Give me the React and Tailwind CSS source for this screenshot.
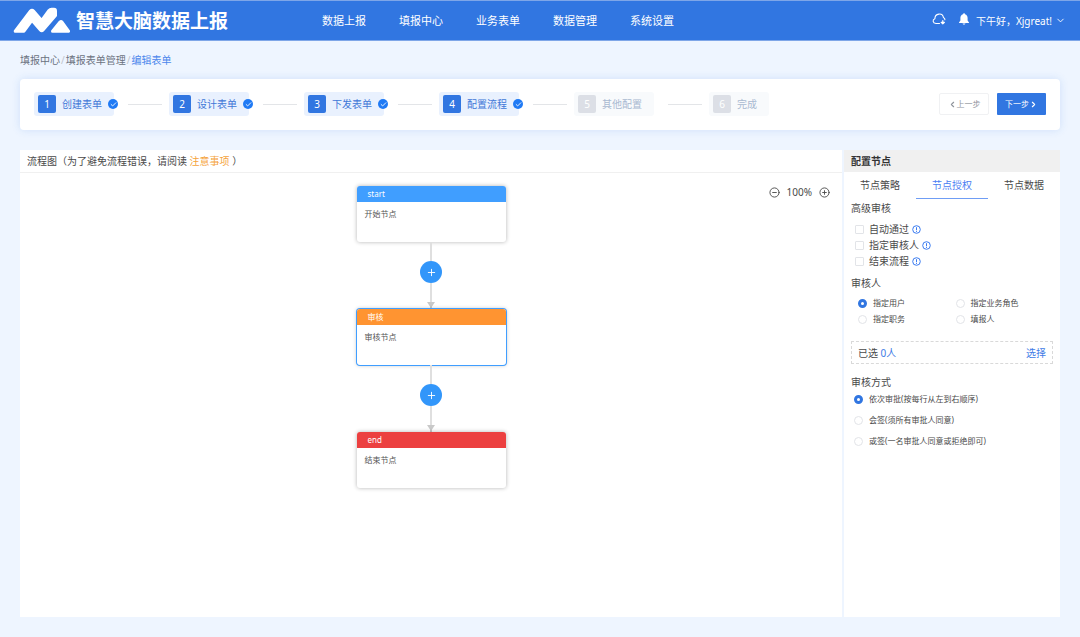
import { useState } from 'react';
import { clsx } from 'clsx';
import { Check, ChevronDown, ChevronLeft, ChevronRight, CircleMinus, CirclePlus, Plus } from 'lucide-react';

const navItems = ['数据上报', '填报中心', '业务表单', '数据管理', '系统设置'];

const steps = [
    { label: '创建表单', done: true },
    { label: '设计表单', done: true },
    { label: '下发表单', done: true },
    { label: '配置流程', done: true },
    { label: '其他配置', done: false },
    { label: '完成', done: false },
];

const nodes = [
    { id: 'start', title: 'start', desc: '开始节点', color: 'bg-[#409eff]' },
    { id: 'audit', title: '审核', desc: '审核节点', color: 'bg-[#ff9431]' },
    { id: 'end', title: 'end', desc: '结束节点', color: 'bg-[#ec4040]' },
];

const tabs = ['节点策略', '节点授权', '节点数据'];
const advanced = ['自动通过', '指定审核人', '结束流程'];
const reviewers = ['指定用户', '指定业务角色', '指定职务', '填报人'];
const modes = ['依次审批(按每行从左到右顺序)', '会签(须所有审批人同意)', '或签(一名审批人同意或拒绝即可)'];

function Logo() {
    return (
        <svg viewBox="0 0 58 28" className="h-7 w-[58px]" fill="#fff" stroke="#fff" strokeWidth="3" strokeLinejoin="round">
            <path d="M3.2 24.200 L18.500 4 Q20 2.300 21.500 4 L29.700 13.500 L37 3.500 Q38 2.300 39.500 2.300 H42 Q43.500 2.300 43.500 4 V8.500 L31 23 Q29.700 24.500 28.400 23 L21 14.500 Q20 13.500 19 14.700 L12 24.200 Z" />
            <path d="M40.500 24.200 L48 15 Q49 14 50 15 L56.500 24.200 Z" />
        </svg>
    );
}

function CloudIcon() {
    return (
        <svg viewBox="0 0 14 12" className="h-3 w-[14px]" fill="none" stroke="#fff" strokeWidth="1.1" strokeLinecap="round" strokeLinejoin="round">
            <path d="M7.500 10.500 H4 C0.600 10.300 0.200 6.800 2.900 5.800 C2.800 0 10.700 -0.500 11.400 4.500 C12.500 5 13 5.800 12.900 6.800" />
            <path d="M10.800 7.600 V10.800 M9.200 9.300 L10.800 10.900 L12.400 9.300 Z" strokeWidth="1.200" />
        </svg>
    );
}

function BellIcon() {
    return (
        <svg viewBox="0 0 12 12" className="size-3" fill="#fff">
            <path d="M6 0.300 C6.600 0.300 7 0.700 7 1.200 C8.800 1.700 9.600 3.200 9.600 5 V7.600 L11 9.400 V10 H1 V9.400 L2.400 7.600 V5 C2.400 3.200 3.200 1.700 5 1.200 C5 0.700 5.400 0.300 6 0.300 Z M4.600 10.600 H7.400 C7.200 12 4.800 12 4.600 10.600 Z" />
        </svg>
    );
}

function InfoIcon() {
    return (
        <svg viewBox="0 0 9 9" className="size-[9px]" fill="none" stroke="#3b7bf0" strokeWidth="1">
            <circle cx="4.500" cy="4.500" r="3.800" />
            <path d="M4.500 2.200 V5.200 M4.500 5.900 V6.900" />
        </svg>
    );
}

function Header() {
    return (
        <header className="flex h-[41px] items-center border-y border-[#7ea6e8] bg-[#3176e1] pl-3 pr-[14px] text-white">
            <Logo />
            <span className="ml-[6px] whitespace-nowrap text-[19px] leading-6 font-bold">智慧大脑数据上报</span>
            <nav className="ml-[94px] flex gap-[33px] whitespace-nowrap text-[11px] leading-4">
                {navItems.map((item) => (
                    <a key={item} href="#">{item}</a>
                ))}
            </nav>
            <div className="ml-auto flex items-center">
                <button aria-label="同步" className="pb-[3px]"><CloudIcon /></button>
                <button aria-label="通知" className="ml-3 pb-[3px]"><BellIcon /></button>
                <button className="ml-[6px] flex items-center gap-[3px] whitespace-nowrap text-[10px] leading-4">
                    下午好，Xjgreat!
                    <ChevronDown className="size-[11px]" strokeWidth={2} />
                </button>
            </div>
        </header>
    );
}

function Step({ index, label, done }) {
    return (
        <li className="flex items-center">
            {index > 0 && <span className="ml-[14px] mr-[7px] h-px w-[34px] bg-[#e3e5e8]" />}
            <div className={clsx(
                'relative flex h-6 items-center gap-[6px] rounded-[3px] pl-1 pr-3 text-[10px] leading-4 whitespace-nowrap',
                done ? 'bg-[#e9f1fe] text-[#3f78d8]' : 'bg-[#f8fafc] text-[#a9b9d1]'
            )}>
                <span className={clsx(
                    'flex size-[18px] items-center justify-center rounded-[2px] text-white',
                    done ? 'bg-[#3176e1]' : 'bg-[#dcdfe6]'
                )}>
                    {index + 1}
                </span>
                {label}
                {done && (
                    <span className="absolute -right-1 flex size-[10px] items-center justify-center rounded-full bg-[#1f7af5] text-white">
                        <Check className="size-[7px]" strokeWidth={3} />
                    </span>
                )}
            </div>
        </li>
    );
}

function FlowNode({ node, active, onSelect }) {
    return (
        <button
            onClick={onSelect}
            className={clsx(
                'flex h-14 w-[149px] flex-col overflow-hidden rounded-[3px] bg-white text-left text-[8px] leading-4 shadow-[0_0_4px_rgba(0,0,0,0.3)]',
                active && 'ring-1 ring-[#409eff]'
            )}
        >
            <span className={clsx('w-full pl-[11px] text-white', node.color)}>{node.title}</span>
            <span className="pl-2 pt-1 text-[#555]">{node.desc}</span>
        </button>
    );
}

function Connector() {
    return (
        <div className="flex flex-col items-center">
            <span className="h-[19px] w-[2px] bg-[#dfdfdf]" />
            <button aria-label="添加节点" className="flex size-[22px] items-center justify-center rounded-full bg-[#3296fa] text-white">
                <Plus className="size-[11px]" strokeWidth={2} />
            </button>
            <span className="h-[19px] w-[2px] bg-[#dfdfdf]" />
            <svg viewBox="0 0 8 7" className="h-[7px] w-2" fill="#c9c9c9">
                <path d="M0 0 H8 L5 4.500 V7 H3 V4.500 Z" />
            </svg>
        </div>
    );
}

function Radio({ name, label, checked, onChange }) {
    return (
        <label className="flex items-center gap-[6px] whitespace-nowrap text-[8px] leading-4">
            <input
                type="radio"
                name={name}
                checked={checked}
                onChange={onChange}
                className="size-[9px] shrink-0 appearance-none rounded-full border border-[#e2e4e8] bg-white checked:border-[3px] checked:border-[#3176e1]"
            />
            {label}
        </label>
    );
}

function ConfigPanel() {
    const [tab, setTab] = useState(1);
    const [reviewer, setReviewer] = useState(0);
    const [mode, setMode] = useState(0);

    return (
        <aside className="w-[216px] shrink-0 bg-white text-[10px] leading-4 text-[#4a4a4a]">
            <h2 className="bg-[#f0f0f0] px-[7px] py-[3px] font-bold text-[#333]">配置节点</h2>
            <div role="tablist" className="flex">
                {tabs.map((item, i) => (
                    <button
                        key={item}
                        role="tab"
                        aria-selected={i === tab}
                        onClick={() => setTab(i)}
                        className={clsx(
                            'h-[27px] flex-1 border-b',
                            i === tab ? 'border-[#6f9df5] text-[#4b7df3]' : 'border-transparent'
                        )}
                    >
                        {item}
                    </button>
                ))}
            </div>

            <div className="px-[7px]">
                <h3 className="mt-px">高级审核</h3>
                <div className="mt-[5px] pl-1">
                    {advanced.map((item) => (
                        <label key={item} className="flex items-center">
                            <input type="checkbox" className="size-[9px] appearance-none rounded-[1px] border border-[#e2e4e8] bg-white checked:bg-[#3176e1]" />
                            <span className="ml-[5px] mr-[3px]">{item}</span>
                            <InfoIcon />
                        </label>
                    ))}
                </div>

                <h3 className="mt-[6px]">审核人</h3>
                <div className="mt-1 grid grid-cols-2 pl-[7px]">
                    {reviewers.map((item, i) => (
                        <Radio key={item} name="reviewer" label={item} checked={i === reviewer} onChange={() => setReviewer(i)} />
                    ))}
                </div>

                <div className="mt-[14px] flex h-[23px] items-center justify-between border border-dashed border-[#d9d9d9] px-[6px]">
                    <span>已选 <span className="text-[#3f7be6]">0人</span></span>
                    <button className="text-[#3f7be6]">选择</button>
                </div>

                <h3 className="mt-[10px]">审核方式</h3>
                <div className="mt-px flex flex-col gap-[5px] pl-[3px]">
                    {modes.map((item, i) => (
                        <Radio key={item} name="mode" label={item} checked={i === mode} onChange={() => setMode(i)} />
                    ))}
                </div>
            </div>
        </aside>
    );
}

export default function App() {
    const [selected, setSelected] = useState('audit');

    return (
        <div className="flex min-h-screen flex-col bg-[#eef5ff] font-['Noto_Sans','Noto_Sans_CJK_SC',sans-serif]">
            <Header />

            <main className="flex flex-1 flex-col px-5 pb-5">
                {/* Breadcrumb */}
                <nav className="flex h-[38px] items-center gap-px pb-px text-[10px] leading-4 text-[#6b7280]">
                    <a href="#">填报中心</a>
                    <span className="text-[#c0c4cc]">/</span>
                    <a href="#">填报表单管理</a>
                    <span className="text-[#c0c4cc]">/</span>
                    <a href="#" className="text-[#4b86ec]">编辑表单</a>
                </nav>

                {/* Steps */}
                <section className="flex h-[51px] items-center rounded-[4px] bg-white px-[14px] pb-px shadow-[0_0_8px_rgba(49,118,225,0.16)]">
                    <ol className="flex">
                        {steps.map((step, i) => (
                            <Step key={step.label} index={i} label={step.label} done={step.done} />
                        ))}
                    </ol>
                    <div className="ml-auto flex gap-2 text-[8px] leading-4">
                        <button className="flex h-[22px] w-[50px] items-center justify-center rounded-[2px] border border-[#f0f1f3] text-[#8f949c]">
                            <ChevronLeft className="size-[9px]" strokeWidth={3} />
                            上一步
                        </button>
                        <button className="flex h-[22px] w-[49px] items-center justify-center rounded-[1px] bg-[#3176e1] text-white">
                            下一步
                            <ChevronRight className="size-[9px]" strokeWidth={3} />
                        </button>
                    </div>
                </section>

                <div className="mt-5 flex flex-1 gap-[2px]">
                    {/* Flow chart */}
                    <section className="flex flex-1 flex-col bg-white">
                        <h2 className="border-b border-[#f0f0f0] px-[7px] py-[3px] text-[10px] leading-4 text-[#4a4a4a]">
                            流程图（为了避免流程错误，请阅读 <a href="#" className="text-[#f5a33c]">注意事项</a> ）
                        </h2>
                        <div className="relative flex flex-1 flex-col items-center pt-[13px]">
                            <div className="absolute right-3 top-[11px] flex items-center gap-[7px] text-[10px] leading-4 text-[#4a4a4a]">
                                <button aria-label="缩小"><CircleMinus className="size-[11px]" strokeWidth={2} /></button>
                                100%
                                <button aria-label="放大"><CirclePlus className="size-[11px]" strokeWidth={2} /></button>
                            </div>
                            {nodes.map((node, i) => (
                                <div key={node.id} className="flex flex-col items-center">
                                    {i > 0 && <Connector />}
                                    <FlowNode node={node} active={node.id === selected} onSelect={() => setSelected(node.id)} />
                                </div>
                            ))}
                        </div>
                    </section>

                    <ConfigPanel />
                </div>
            </main>
        </div>
    );
}
